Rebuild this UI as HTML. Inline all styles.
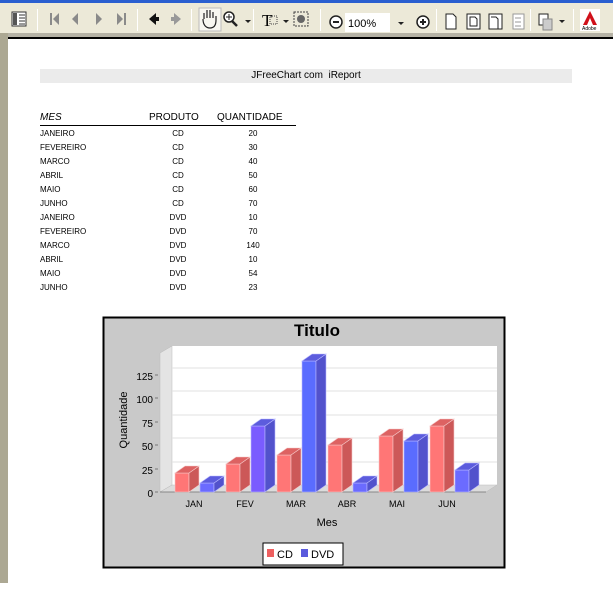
<!DOCTYPE html>
<html><head><meta charset="utf-8"><style>
*{margin:0;padding:0;box-sizing:border-box}
body{width:613px;height:594px;position:relative;background:#fff;font-family:"Liberation Sans",Arial,sans-serif;overflow:hidden}
.abs{position:absolute}
#top{left:0;top:0;width:613px;height:3px;background:#2a5fd0}
#tb{left:0;top:3px;width:613px;height:30px;background:#ece9d8}
#tb2{left:0;top:33px;width:613px;height:5px;background:#b5b2a5}
#lstrip{left:0;top:33px;width:8px;height:550px;background:#aca893}
#pg{left:8px;top:37px;width:605px;height:2px;background:#000}
.sep{position:absolute;top:6px;width:1px;height:22px;background:#aca899;border-right:1px solid #fff}
.t{position:absolute;font-size:9px;top:0}
td{font-size:8px;height:14px;padding:0}
</style></head><body>
<div class="abs" id="top"></div>
<div class="abs" id="tb">
<svg width="613" height="30" style="position:absolute;left:0;top:0">
<g fill="none" stroke="#333">
<rect x="12" y="9" width="14" height="14" fill="#fff"/>
<rect x="13" y="10" width="4" height="12" fill="#555" stroke="none"/>
<path d="M19 12h6M19 15h6M19 18h6M19 21h6"/>
</g>
<g fill="#8a8a8a">
<rect x="50" y="10" width="2" height="12"/><path d="M59 10v12l-6-6z"/>
<path d="M78 10v12l-6-6z"/>
<path d="M96 10v12l6-6z"/>
<path d="M117 10v12l6-6z"/><rect x="124" y="10" width="2" height="12"/>
</g>
<path d="M149 16l7-6v4h3v4h-3v4z" fill="#111"/>
<path d="M181 16l-7-6v4h-3v4h3v4z" fill="#999"/>
<rect x="170" y="3" width="1" height="1" fill="none"/>
<rect x="199" y="5" width="22" height="23" fill="#f8f7f0" stroke="#bbb"/>
<path d="M204 16v-6M207 15v-8M210 15v-8M213 15v-6M203 16c0 6 3 9 7 9s6-3 6-8v-4" fill="none" stroke="#222" stroke-width="1.2"/>
<circle cx="229" cy="14" r="5" fill="#fff" stroke="#222" stroke-width="1.5"/><path d="M232 18l5 5" stroke="#222" stroke-width="2.5"/><path d="M226 14h6M229 11v6" stroke="#222"/>
<path d="M245 17l3 3 3-3z" fill="#222"/>
<text x="262" y="23" font-size="17" font-family="Liberation Serif">T</text>
<rect x="270" y="13" width="7" height="8" fill="none" stroke="#444" stroke-dasharray="1 1"/>
<path d="M283 17l3 3 3-3z" fill="#222"/>
<rect x="294" y="9" width="14" height="14" fill="none" stroke="#444" stroke-dasharray="2 1"/><circle cx="301" cy="16" r="4" fill="#666"/>
<circle cx="336" cy="19" r="6" fill="#fff" stroke="#222" stroke-width="1.5"/><path d="M333 19h6" stroke="#222" stroke-width="2"/>
<rect x="345" y="10" width="45" height="19" fill="#fff"/>
<text x="348" y="24" font-size="11" fill="#000">100%</text>
<path d="M398 19l3 3 3-3z" fill="#222"/>
<circle cx="423" cy="19" r="6" fill="#fff" stroke="#222" stroke-width="1.5"/><path d="M420 19h6M423 16v6" stroke="#222" stroke-width="2"/>
<g fill="#fff" stroke="#222"><path d="M446 11h7l3 3v12h-10z"/>
<rect x="467" y="11" width="13" height="15"/><path d="M470 14h5l2 2v7h-7z"/>
<rect x="489" y="11" width="13" height="15"/><path d="M491 14h5l2 2v10"/></g>
<rect x="513" y="11" width="11" height="15" fill="#fff" stroke="#999"/><path d="M515 15h6M515 19h6M515 23h6" stroke="#999"/>
<rect x="539" y="11" width="9" height="11" fill="#fff" stroke="#222"/><rect x="543" y="16" width="9" height="11" fill="#ccc" stroke="#888"/>
<path d="M559 17l3 3 3-3z" fill="#222"/>
<rect x="580" y="6" width="20" height="22" fill="#fff"/><path d="M583 22l7-14 7 14h-4l-3-7-3 7z" fill="#d0101a"/>
<text x="582" y="27" font-size="5" fill="#000">Adobe</text>
</svg>
<div class="sep" style="left:37px"></div><div class="sep" style="left:137px"></div>
<div class="sep" style="left:191px"></div><div class="sep" style="left:253px"></div>
<div class="sep" style="left:320px"></div><div class="sep" style="left:436px"></div>
<div class="sep" style="left:530px"></div><div class="sep" style="left:573px"></div>
</div>
<div class="abs" id="tb2"></div>
<div class="abs" id="lstrip"></div>
<div class="abs" id="pg"></div>
<div class="abs" style="left:8px;top:39px;width:605px;height:555px;background:#fff"></div>
<div class="abs" style="left:0;top:583px;width:613px;height:11px;background:#fff"></div>

<div class="abs" style="left:40px;top:69px;width:532px;height:14px;background:#ebebeb;font-size:10px;text-align:center;line-height:14px">JFreeChart com&nbsp; iReport</div>

<div class="abs" style="left:40px;top:112px;font-size:10px;font-style:italic;">MES</div>
<div class="abs" style="left:149px;top:112px;font-size:10px">PRODUTO</div>
<div class="abs" style="left:217px;top:112px;font-size:10px">QUANTIDADE</div>
<div class="abs" style="left:40px;top:125px;width:256px;height:1px;background:#000"></div>
<table class="abs" style="left:40px;top:126px;border-collapse:collapse">
<tr><td style="width:100px">JANEIRO</td><td style="width:76px;text-align:center">CD</td><td style="width:74px;text-align:center">20</td></tr>
<tr><td>FEVEREIRO</td><td align="center">CD</td><td align="center">30</td></tr>
<tr><td>MARCO</td><td align="center">CD</td><td align="center">40</td></tr>
<tr><td>ABRIL</td><td align="center">CD</td><td align="center">50</td></tr>
<tr><td>MAIO</td><td align="center">CD</td><td align="center">60</td></tr>
<tr><td>JUNHO</td><td align="center">CD</td><td align="center">70</td></tr>
<tr><td>JANEIRO</td><td align="center">DVD</td><td align="center">10</td></tr>
<tr><td>FEVEREIRO</td><td align="center">DVD</td><td align="center">70</td></tr>
<tr><td>MARCO</td><td align="center">DVD</td><td align="center">140</td></tr>
<tr><td>ABRIL</td><td align="center">DVD</td><td align="center">10</td></tr>
<tr><td>MAIO</td><td align="center">DVD</td><td align="center">54</td></tr>
<tr><td>JUNHO</td><td align="center">DVD</td><td align="center">23</td></tr>
</table>

<svg class="abs" style="left:0;top:0" width="613" height="594">
<rect x="103.5" y="317.5" width="401" height="250" fill="#c9c9c9" stroke="#000" stroke-width="2"/>
<text x="317" y="336" font-size="17" font-weight="bold" text-anchor="middle">Titulo</text>
<polygon points="172,346 497,346 497,485 172,485" fill="#fff"/>
<polygon points="160,353 172,346 172,485 160,492" fill="#e4e4e4" stroke="#bbb" stroke-width=".5"/>
<polygon points="160,492 172,485 497,485 486,492" fill="#dcdcdc" stroke="#bbb" stroke-width=".5"/>
<g stroke="#e2e2e2" stroke-width="1">
<path d="M172 368H497M172 391H497M172 415H497M172 438H497M172 462H497"/>
</g>
<path d="M160 492H486" stroke="#888"/>
<g font-size="10" text-anchor="end" fill="#000">
<text x="153" y="380">125</text><text x="153" y="403">100</text><text x="153" y="427">75</text>
<text x="153" y="450">50</text><text x="153" y="474">25</text><text x="153" y="497">0</text>
</g>
<g stroke="#777"><path d="M155 375h3M155 398h3M155 422h3M155 445h3M155 469h3M155 492h3"/></g>
<text transform="translate(127,420) rotate(-90)" font-size="11" text-anchor="middle">Quantidade</text>
<g font-size="9" text-anchor="middle">
<text x="194" y="507">JAN</text><text x="245" y="507">FEV</text><text x="296" y="507">MAR</text>
<text x="347" y="507">ABR</text><text x="397" y="507">MAI</text><text x="447" y="507">JUN</text>
</g>
<text x="327" y="526" font-size="11" text-anchor="middle">Mes</text>

<g id="cd" stroke="#f5c8c8" stroke-width=".6">
<g transform="translate(175,473)"><rect width="14" height="19" fill="#ff7676"/><polygon points="14,0 24,-7 24,12 14,19" fill="#cc5858"/><polygon points="0,0 10,-7 24,-7 14,0" fill="#dd6262"/></g>
<g transform="translate(226,464)"><rect width="14" height="28" fill="#ff7676"/><polygon points="14,0 24,-7 24,21 14,28" fill="#cc5858"/><polygon points="0,0 10,-7 24,-7 14,0" fill="#dd6262"/></g>
<g transform="translate(277,455)"><rect width="14" height="37" fill="#ff7676"/><polygon points="14,0 24,-7 24,30 14,37" fill="#cc5858"/><polygon points="0,0 10,-7 24,-7 14,0" fill="#dd6262"/></g>
<g transform="translate(328,445)"><rect width="14" height="47" fill="#ff7676"/><polygon points="14,0 24,-7 24,40 14,47" fill="#cc5858"/><polygon points="0,0 10,-7 24,-7 14,0" fill="#dd6262"/></g>
<g transform="translate(379,436)"><rect width="14" height="56" fill="#ff7676"/><polygon points="14,0 24,-7 24,49 14,56" fill="#cc5858"/><polygon points="0,0 10,-7 24,-7 14,0" fill="#dd6262"/></g>
<g transform="translate(430,426)"><rect width="14" height="66" fill="#ff7676"/><polygon points="14,0 24,-7 24,59 14,66" fill="#cc5858"/><polygon points="0,0 10,-7 24,-7 14,0" fill="#dd6262"/></g>
</g>
<g stroke="#b8b8ff" stroke-width=".6">
<g transform="translate(200,483)"><rect width="14" height="9" fill="#6b6bff"/><polygon points="14,0 24,-7 24,2 14,9" fill="#5252cc"/><polygon points="0,0 10,-7 24,-7 14,0" fill="#5c5cdd"/></g>
<g transform="translate(251,426)"><rect width="14" height="66" fill="#7a5cff"/><polygon points="14,0 24,-7 24,59 14,66" fill="#5252cc"/><polygon points="0,0 10,-7 24,-7 14,0" fill="#5c5cdd"/></g>
<g transform="translate(302,361)"><rect width="14" height="131" fill="#5a6cff"/><polygon points="14,0 24,-7 24,124 14,131" fill="#5252cc"/><polygon points="0,0 10,-7 24,-7 14,0" fill="#5c5cdd"/></g>
<g transform="translate(353,483)"><rect width="14" height="9" fill="#6b6bff"/><polygon points="14,0 24,-7 24,2 14,9" fill="#5252cc"/><polygon points="0,0 10,-7 24,-7 14,0" fill="#5c5cdd"/></g>
<g transform="translate(404,441)"><rect width="14" height="51" fill="#5a6cff"/><polygon points="14,0 24,-7 24,44 14,51" fill="#5252cc"/><polygon points="0,0 10,-7 24,-7 14,0" fill="#5c5cdd"/></g>
<g transform="translate(455,470)"><rect width="14" height="22" fill="#6b6bff"/><polygon points="14,0 24,-7 24,15 14,22" fill="#5252cc"/><polygon points="0,0 10,-7 24,-7 14,0" fill="#5c5cdd"/></g>
</g>
<rect x="263" y="543" width="80" height="22" fill="#fff" stroke="#000"/>
<rect x="267" y="549" width="7" height="8" fill="#ee6060"/>
<text x="277" y="558" font-size="11">CD</text>
<rect x="301" y="549" width="7" height="8" fill="#5a5add"/>
<text x="311" y="558" font-size="11">DVD</text>
</svg>
</body></html>
